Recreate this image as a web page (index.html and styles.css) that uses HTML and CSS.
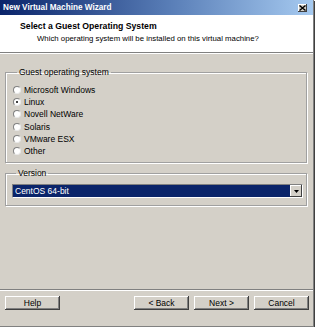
FILE: index.html
```html
<!DOCTYPE html>
<html lang="en">
<head>
  <meta charset="UTF-8">
  <title>New Virtual Machine Wizard</title>
  <link rel="stylesheet" href="styles.css">
</head>
<body>
  <div class="window">
    <div class="titlebar">
      <span class="title">New Virtual Machine Wizard</span>
      <span class="close">
        <svg width="7" height="6" viewBox="0 0 7 6"><path d="M0.5 0.5 L6.5 5.5 M6.5 0.5 L0.5 5.5" stroke="#000" stroke-width="1.4"/></svg>
      </span>
    </div>

    <!-- wizard page header -->
    <div class="header">
      <h1>Select a Guest Operating System</h1>
      <p>Which operating system will be installed on this virtual machine?</p>
    </div>

    <div class="content">
      <fieldset class="group os-group">
        <legend>Guest operating system</legend>
        <div class="radio"><span class="dot"></span>Microsoft Windows</div>
        <div class="radio"><span class="dot checked"></span>Linux</div>
        <div class="radio"><span class="dot"></span>Novell NetWare</div>
        <div class="radio"><span class="dot"></span>Solaris</div>
        <div class="radio"><span class="dot"></span>VMware ESX</div>
        <div class="radio"><span class="dot"></span>Other</div>
      </fieldset>

      <fieldset class="group version-group">
        <legend>Version</legend>
        <div class="select">
          <span class="value">CentOS 64-bit</span>
          <span class="drop">
            <svg width="5" height="3" viewBox="0 0 5 3"><path d="M0 0 H5 L2.5 3 Z" fill="#000"/></svg>
          </span>
        </div>
      </fieldset>
    </div>

    <div class="footer">
      <button class="btn">Help</button>
      <span class="spacer"></span>
      <button class="btn">&lt; Back</button>
      <button class="btn">Next &gt;</button>
      <button class="btn cancel">Cancel</button>
    </div>
  </div>
</body>
</html>
```

FILE: styles.css
```css
body {
  margin: 0;
  background-color: #fff;
  font-family: 'Liberation Sans', Arial, sans-serif;
  font-size: 8.5px;
  color: #000;
}
.window {
  width: 313px;
  height: 326px;
  background-color: #d4d0c8;
  border-right: 1px solid #808080;
  border-bottom: 1px solid #808080;
  box-shadow: 1px 1px 0 #404040;
  display: flex;
  flex-direction: column;
}
.titlebar {
  height: 15px;
  display: flex;
  align-items: center;
  padding: 0 3px;
  background: linear-gradient(to right, #0a246a, #5a7fb8 55%, #a6caf0);
  color: #fff;
  font-weight: bold;
  font-size: 8.2px;
}
.title {
  flex: 1;
}
.close {
  width: 9px;
  height: 8px;
  display: flex;
  align-items: center;
  justify-content: center;
  background-color: #d4d0c8;
  box-shadow: inset -1px -1px #404040, inset 1px 1px #fff;
  margin-right: 3px;
}
.header {
  height: 38px;
  background-color: #fff;
  border-bottom: 1px solid #808080;
  box-shadow: 0 1px 0 #fff;
  padding: 0 0 0 20px;
  box-sizing: border-box;
}
.header h1 {
  margin: 6px 0 0;
  font-size: 8.7px;
  font-weight: bold;
}
.header p {
  margin: 3px 0 0 17px;
  font-size: 7.8px;
}
.content {
  flex: 1;
  padding: 14px 6px 0 5px;
}
.group {
  margin: 0;
  padding: 0;
  border: 1px solid #a0a0a0;
  box-shadow: inset 1px 1px 0 #fff, 1px 1px 0 #fff;
}
.group legend {
  margin-left: 4px;
  padding: 0 2px;
}
.os-group {
  height: 96px;
  box-sizing: border-box;
  padding: 7px 0 0 7px;
}
.radio {
  height: 12.2px;
  display: flex;
  align-items: center;
  gap: 3px;
}
.dot {
  width: 6px;
  height: 6px;
  border-radius: 50%;
  background-color: #fff;
  border: 1px solid;
  border-color: #808080 #e8e8e8 #e8e8e8 #808080;
  display: flex;
  align-items: center;
  justify-content: center;
}
.dot.checked::after {
  content: '';
  width: 2px;
  height: 2px;
  border-radius: 50%;
  background-color: #000;
}
.version-group {
  margin-top: 5px;
  height: 38px;
  box-sizing: border-box;
  padding: 6px 3px 0 6px;
}
.select {
  height: 14px;
  display: flex;
  align-items: center;
  background-color: #fff;
  border: 1px solid;
  border-color: #808080 #fff #fff #808080;
  box-sizing: border-box;
}
.select .value {
  flex: 1;
  align-self: stretch;
  display: flex;
  align-items: center;
  padding-left: 2px;
  background-color: #0a246a;
  color: #fff;
}
.drop {
  width: 12px;
  height: 12px;
  display: flex;
  align-items: center;
  justify-content: center;
  background-color: #d4d0c8;
  box-shadow: inset -1px -1px #404040, inset 1px 1px #fff;
}
.footer {
  height: 30px;
  border-top: 1px solid #808080;
  box-shadow: inset 0 1px 0 #fff;
  display: flex;
  align-items: flex-start;
  gap: 5px;
  padding: 6px 4px 0 5px;
}
.spacer {
  flex: 1;
}
.btn {
  width: 55px;
  height: 14px;
  padding: 0;
  border: none;
  background-color: #d4d0c8;
  box-shadow: inset -1px -1px #404040, inset 1px 1px #fff, inset -2px -2px #808080;
  font-family: 'Liberation Sans', Arial, sans-serif;
  font-size: 8.5px;
  color: #000;
}
```
